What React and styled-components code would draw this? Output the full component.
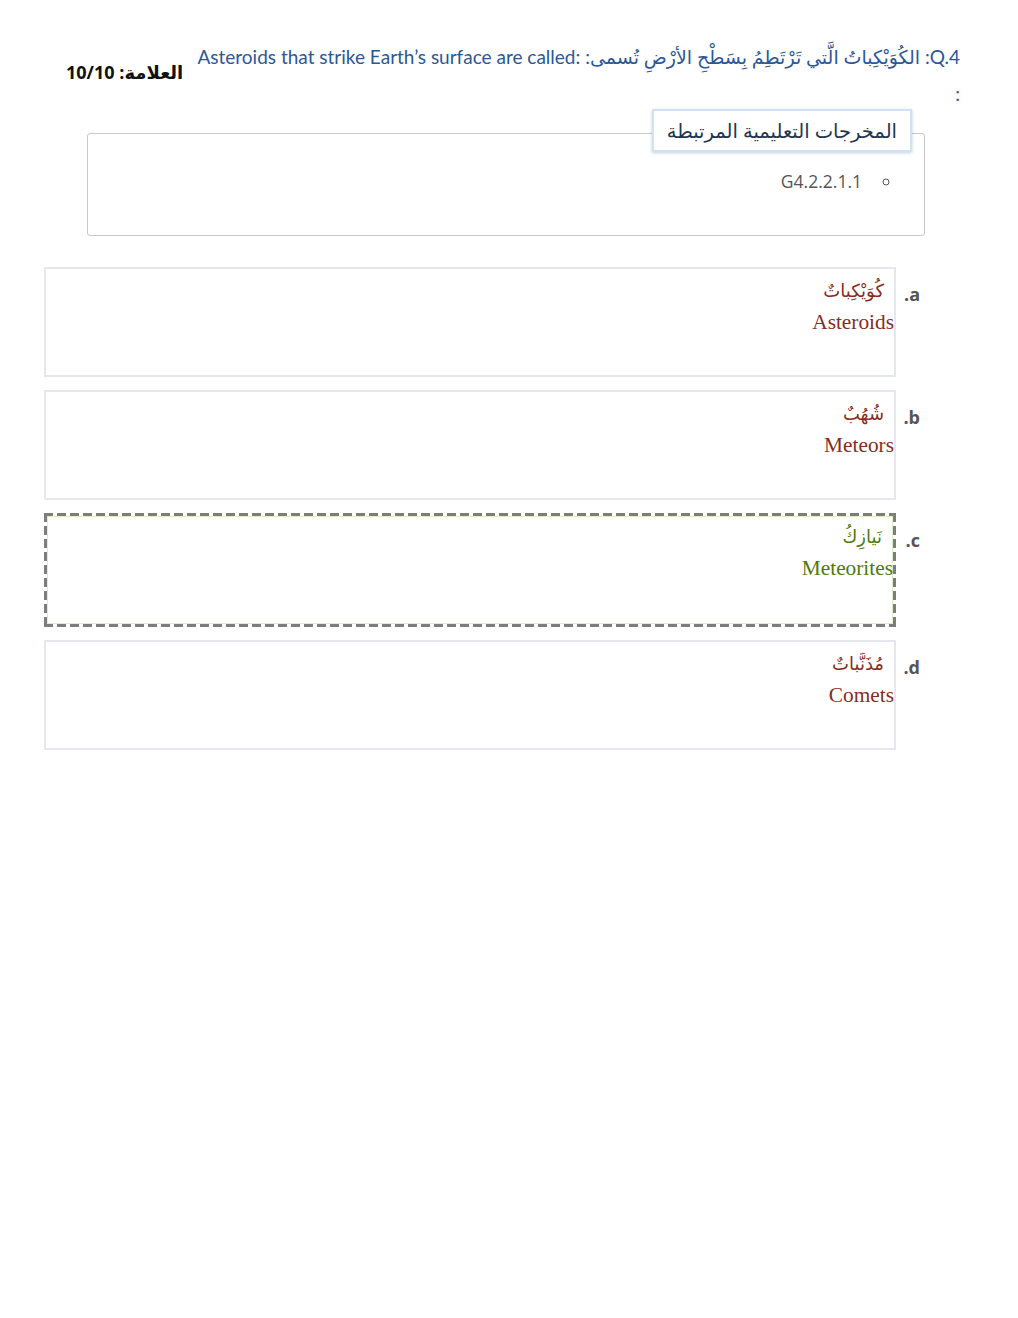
import styled, { createGlobalStyle } from "styled-components";

const GlobalStyle = createGlobalStyle`
  html, body {
    margin: 0;
    padding: 0;
    background: #ffffff;
  }
  body {
    font-family: "Open Sans", "DejaVu Sans", sans-serif;
  }
`;

const options = [
  { key: "a", ar: "كُوَيْكِباتٌ", en: "Asteroids", selected: false },
  { key: "b", ar: "شُهُبٌ", en: "Meteors", selected: false },
  { key: "c", ar: "نَيازِكُ", en: "Meteorites", selected: true },
  { key: "d", ar: "مُذَنَّباتٌ", en: "Comets", selected: false },
];

export default function App() {
  return (
    <>
      <GlobalStyle />
      <Page dir="rtl">
        <Header>
          <Question>
            Q.4: الكُوَيْكِباتُ الَّتي تَرْتَطِمُ بِسَطْحِ الأرْضِ تُسمى:{" "}
            <bdi>Asteroids that strike Earth’s surface are called:</bdi>
            <br />:
          </Question>
          <Score>العلامة: 10/10</Score>
        </Header>

        <Outcomes>
          <Legend>المخرجات التعليمية المرتبطة</Legend>
          <OutcomeList>
            <li>G4.2.2.1.1</li>
          </OutcomeList>
        </Outcomes>

        <Options>
          {options.map((opt) => (
            <OptionRow key={opt.key}>
              <Letter>{opt.key}.</Letter>
              <OptionBox selected={opt.selected}>
                <ArabicLine selected={opt.selected}>{opt.ar}</ArabicLine>
                <EnglishLine selected={opt.selected}>{opt.en}</EnglishLine>
              </OptionBox>
            </OptionRow>
          ))}
        </Options>
      </Page>
    </>
  );
}

const Page = styled.div`
  padding: 38px 58px 40px 44px;
  box-sizing: border-box;
  width: 1018px;
`;

const Header = styled.div`
  display: flex;
  align-items: flex-start;
  justify-content: space-between;
  gap: 6px;
`;

const Question = styled.div`
  color: #2b5797;
  font-size: 19px;
  line-height: 37px;
  font-family: "Lato", "DejaVu Sans", sans-serif;
`;

const Score = styled.div`
  margin-top: 22px;
  margin-left: 22px;
  white-space: nowrap;
  font-weight: bold;
  font-size: 18px;
  color: #111;
  font-family: "Open Sans", "DejaVu Sans", sans-serif;
`;

const Outcomes = styled.fieldset`
  margin: 0 35px 0 43px;
  padding: 0 12px 42px 12px;
  border: 1px solid #c8c8c8;
  border-radius: 3px;
`;

const Legend = styled.legend`
  position: relative;
  top: -3px;
  padding: 8px 13px 7px 13px;
  background: #ffffff;
  border: 2px solid #cfe3f5;
  box-shadow: 0 1px 3px rgba(80, 130, 180, 0.35);
  color: #1f3550;
  font-size: 19.5px;
  font-family: "Open Sans", "DejaVu Sans", sans-serif;
  line-height: 24px;
`;

const OutcomeList = styled.ul`
  margin: 14px 0 0 0;
  padding: 0 42px 0 0;
  list-style: circle;
  color: #555;
  font-size: 17.5px;
  font-family: "Open Sans", "DejaVu Sans", sans-serif;
  line-height: 24px;

  li {
    padding-right: 8px;
  }
`;

const Options = styled.div`
  display: flex;
  flex-direction: column;
  gap: 13px;
  margin-top: 31px;
  margin-right: 30px;
`;

const OptionRow = styled.div`
  display: flex;
  align-items: flex-start;
`;

const Letter = styled.div`
  width: 34px;
  flex: none;
  padding-top: 15px;
  padding-right: 10px;
  box-sizing: border-box;
  font-weight: bold;
  font-size: 18px;
  color: #555;
  font-family: "Open Sans", "DejaVu Sans", sans-serif;
`;

const dashes = `
  repeating-linear-gradient(to right, #7d7d7d 0 9px, transparent 9px 13px) top left / 100% 3px no-repeat,
  repeating-linear-gradient(to right, #7d7d7d 0 9px, transparent 9px 13px) bottom left / 100% 3px no-repeat,
  repeating-linear-gradient(to bottom, #7d7d7d 0 9px, transparent 9px 13px) top left / 3px 100% no-repeat,
  repeating-linear-gradient(to bottom, #7d7d7d 0 9px, transparent 9px 13px) top right / 3px 100% no-repeat
`;

const OptionBox = styled.div`
  flex: 1;
  height: ${({ selected }) => (selected ? "114px" : "110px")};
  box-sizing: border-box;
  padding: 9px 0 0 0;
  border: ${({ selected }) =>
    selected ? "3px solid transparent" : "2px solid #e4e6f0"};
  background: ${({ selected }) => (selected ? dashes : "#ffffff")};
  background-origin: border-box;
  background-clip: border-box;
  box-shadow: ${({ selected }) =>
    selected ? "inset 0 0 0 1px #dcedc8" : "none"};
  font-family: "Liberation Serif", "DejaVu Sans", serif;
`;

const ArabicLine = styled.div`
  padding-right: ${({ selected }) => (selected ? "11px" : "10px")};
  margin-top: ${({ selected }) => (selected ? "-1px" : "0")};
  font-size: 18px;
  line-height: 26px;
  color: ${({ selected }) => (selected ? "#4e7a0c" : "#862d1f")};
`;

const EnglishLine = styled.div`
  margin-top: 4px;
  font-size: 21.33px;
  line-height: 28px;
  color: ${({ selected }) => (selected ? "#4e7a0c" : "#862d1f")};
`;
